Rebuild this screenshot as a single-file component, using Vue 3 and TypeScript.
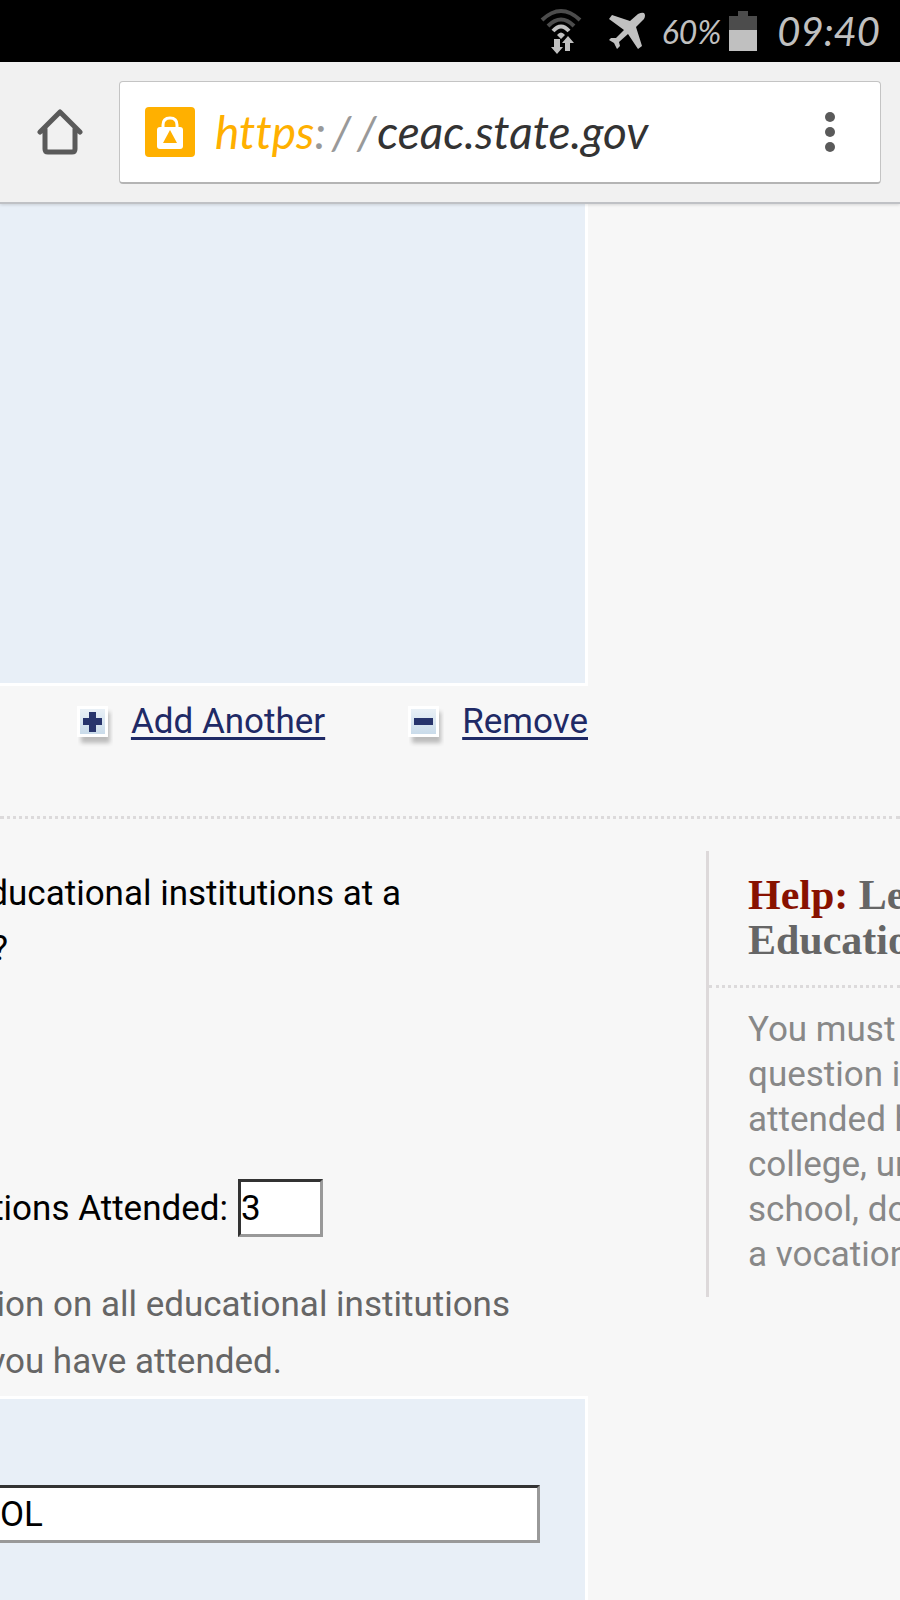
<script setup lang="ts">
import { ref } from 'vue'

const institutionCount = ref('3')
const schoolName = ref('OL')
const helpLines: string[] = [
  'You must',
  'question in',
  'attended h',
  'college, un',
  'school, do',
  'a vocation',
]
</script>

<template>
  <div class="screen">
    <div class="status">
      <svg class="wifi" viewBox="0 0 42 46" aria-hidden="true">
        <g fill="none" stroke-width="4">
          <path d="M2 12Q21 -6 40 12" stroke="#4c4c4c" />
          <path d="M8 18Q21 5 34 18" stroke="#4c4c4c" />
          <path d="M13 23Q21 14 29 23" stroke="#c0c0c0" />
        </g>
        <path d="M17 27Q21 22 25 27L21 31Z" fill="#c0c0c0" />
        <path d="M14 31H20V39H23L17 46L11 39H14ZM25 43V35H22L28 28L34 35H30V43Z" fill="#c0c0c0" />
      </svg>
      <svg class="plane" viewBox="0 0 38 38" aria-hidden="true">
        <path d="M36 1Q38 3 36 7L28 15L34 34L30 37L20 22L11 30L12 34L9 37L6 31L1 28L3 26L8 26L16 18L1 7L4 3L22 9L30 2Q34 0 36 1Z" fill="#c0c0c0" />
      </svg>
      <span class="percent">60%</span>
      <svg class="battery" viewBox="0 0 28 40" aria-hidden="true">
        <path d="M9 0H19V5H28V19H0V5H9Z" fill="#4c4c4c" />
        <path d="M0 19H28V40H0Z" fill="#c0c0c0" />
      </svg>
      <span class="clock">09:40</span>
    </div>

    <header class="toolbar">
      <button class="icon-button home" type="button" aria-label="Home">
        <svg width="46" height="46" viewBox="0 0 46 46">
          <path d="M3 23L23 3L43 23M8 20V40Q8 43 11 43H35Q38 43 38 40V20" fill="none" stroke="#5a5a5a" stroke-width="5" stroke-linejoin="round" stroke-linecap="round" />
        </svg>
      </button>
      <div class="omnibox">
        <svg class="lock" viewBox="0 0 50 50" aria-hidden="true">
          <rect width="50" height="50" rx="4" fill="#ffb000" />
          <path d="M18 22V18Q18 11 25 11T32 18V22" fill="none" stroke="#fff" stroke-width="3" />
          <rect x="12" y="20" width="26" height="22" rx="3" fill="#fff" />
          <path d="M25 23L32 36H18Z" fill="#ffb000" />
        </svg>
        <div class="url">
          <span class="scheme">https</span>
          <span class="slashes"><span>:</span><span>/</span><span>/</span></span>
          <span>ceac.state.gov</span>
        </div>
        <button class="icon-button" type="button" aria-label="Menu">
          <svg width="10" height="40" viewBox="0 0 10 40">
            <g fill="#5a5a5a"><circle cx="5" cy="5" r="5" /><circle cx="5" cy="20" r="5" /><circle cx="5" cy="35" r="5" /></g>
          </svg>
        </button>
      </div>
    </header>

    <main>
      <section class="entry">
        <div class="panel previous"></div>
        <nav class="actions">
          <a href="#add">
            <svg width="36" height="42" viewBox="0 0 36 42" aria-hidden="true">
              <defs>
                <linearGradient id="tile" x2="0" y2="1"><stop stop-color="#e9f0f6" /><stop offset="1" stop-color="#c9dbea" /></linearGradient>
                <filter id="soft"><feGaussianBlur stdDeviation="2" /></filter>
              </defs>
              <rect x="4" y="6" width="29" height="31" fill="#bbb" filter="url(#soft)" />
              <rect width="31" height="31" fill="#fff" />
              <rect x="3" y="3" width="25" height="25" fill="url(#tile)" />
              <path d="M12 6H19V12H25V19H19V26H12V19H6V12H12Z" fill="#27346c" />
            </svg>
            <span>Add Another</span>
          </a>
          <a href="#remove">
            <svg width="36" height="42" viewBox="0 0 36 42" aria-hidden="true">
              <rect x="4" y="6" width="29" height="31" fill="#bbb" filter="url(#soft)" />
              <rect width="31" height="31" fill="#fff" />
              <rect x="3" y="3" width="25" height="25" fill="url(#tile)" />
              <path d="M6 12H25V19H6Z" fill="#27346c" />
            </svg>
            <span>Remove</span>
          </a>
        </nav>
      </section>

      <section class="question">
        <div class="form">
          <p class="line ask">educational institutions at a</p>
          <p class="line ask-end">?</p>
          <div class="line count">
            <label for="count">tions Attended:</label>
            <input id="count" v-model="institutionCount" type="text" />
          </div>
          <p class="line hint">tion on all educational institutions</p>
          <p class="line hint-end">you have attended.</p>
          <div class="panel school">
            <input v-model="schoolName" type="text" aria-label="Name of institution" />
          </div>
        </div>
        <aside class="help">
          <h2><span>Help:</span> Le<br />Education</h2>
          <p><template v-for="line in helpLines" :key="line">{{ line }}<br /></template></p>
        </aside>
      </section>
    </main>
  </div>
</template>

<style>
body {
  margin: 0;
  background: #f7f7f7;
}
</style>

<style scoped>
.screen {
  height: 100vh;
  overflow: hidden;
  display: flex;
  flex-direction: column;
  background: #f7f7f7;
  color: #000;
  font-family: Roboto, "Liberation Sans", sans-serif;
  font-size: 35px;
}
.status {
  flex: none;
  display: flex;
  align-items: center;
  justify-content: flex-end;
  height: 62px;
  padding-right: 20px;
  background: #000;
  color: #c0c0c0;
  font-family: Lato, sans-serif;
  font-style: italic;
}
.wifi { width: 42px; height: 46px; margin-right: 26px; }
.plane { width: 38px; height: 38px; margin-right: 16px; }
.percent { font-size: 32px; margin-right: 8px; }
.battery { width: 28px; height: 40px; margin-right: 20px; }
.clock { font-size: 40px; }
.toolbar {
  flex: none;
  position: relative;
  display: flex;
  align-items: center;
  box-sizing: border-box;
  height: 142px;
  padding-right: 19px;
  border-bottom: 2px solid #bfc1c5;
  background: #f1f1f1;
  box-shadow: 0 1px 3px #0002;
}
.icon-button {
  display: flex;
  padding: 0;
  border: 0;
  background: none;
}
.home { margin: 0 36px 0 37px; }
.omnibox {
  flex: 1;
  display: flex;
  align-items: center;
  box-sizing: border-box;
  height: 103px;
  padding: 0 45px 0 25px;
  border: 1px solid #c4c4c4;
  border-bottom: 2px solid #b4b4b4;
  border-radius: 4px;
  background: #fff;
}
.lock { width: 50px; height: 50px; }
.url {
  flex: 1;
  display: flex;
  margin-left: 20px;
  color: #333;
  font: italic 46px Lato, sans-serif;
  font-variant-ligatures: none;
}
.scheme { color: #ffb000; }
.slashes {
  display: flex;
  gap: 6px;
  margin-right: 1px;
  color: #999;
}
main { flex: 1; min-height: 0; }
.panel {
  box-sizing: border-box;
  border: 3px solid #fff;
  border-left: 0;
  background: #e8eff7;
}
.entry {
  padding-right: 312px;
  padding-bottom: 60px;
  border-bottom: 3px dotted #dcdadb;
}
.previous { height: 482px; border-top: 0; }
.actions {
  display: flex;
  justify-content: flex-end;
  gap: 83px;
  height: 50px;
  padding-top: 20px;
}
a {
  display: flex;
  gap: 18px;
  color: #1f2a66;
  text-decoration: none;
  line-height: 32px;
}
a span {
  text-decoration: underline;
  text-decoration-thickness: 3px;
  text-underline-offset: 4px;
}
.question {
  display: grid;
  grid-template-columns: minmax(0, 1fr) 194px;
  align-items: start;
}
.form { padding: 47px 118px 0 0; }
p { margin: 0; }
.line {
  display: flex;
  justify-content: flex-end;
  white-space: nowrap;
  line-height: 55px;
}
.ask { width: 401px; }
.ask-end { width: 8px; }
.count {
  align-items: center;
  gap: 10px;
  width: 323px;
  height: 58px;
  margin-top: 203px;
}
.hint, .hint-end {
  color: #666;
  line-height: 57px;
}
.hint { width: 510px; margin-top: 39px; }
.hint-end { width: 282px; }
input {
  box-sizing: border-box;
  height: 58px;
  padding: 0;
  border: 3px solid;
  border-color: #333 #999 #999 #333;
  border-radius: 0;
  background: #fff;
  color: #000;
  font: inherit;
}
#count { width: 85px; }
.school {
  height: 320px;
  margin-top: 6px;
  padding: 86px 45px 0 0;
}
.school input {
  display: block;
  width: 100%;
  border-left: 0;
}
.help {
  height: 446px;
  margin-top: 32px;
  border-left: 3px solid #ddd9da;
  color: #888;
  overflow: hidden;
  white-space: nowrap;
  line-height: 45px;
}
.help h2 {
  margin: 0;
  padding: 22px 0 22px 39px;
  border-bottom: 3px dotted #dcdadb;
  color: #666;
  font: bold 42px/45px "Liberation Serif", serif;
}
.help h2 span { color: #881100; }
.help p { padding: 19px 0 0 39px; }
</style>
